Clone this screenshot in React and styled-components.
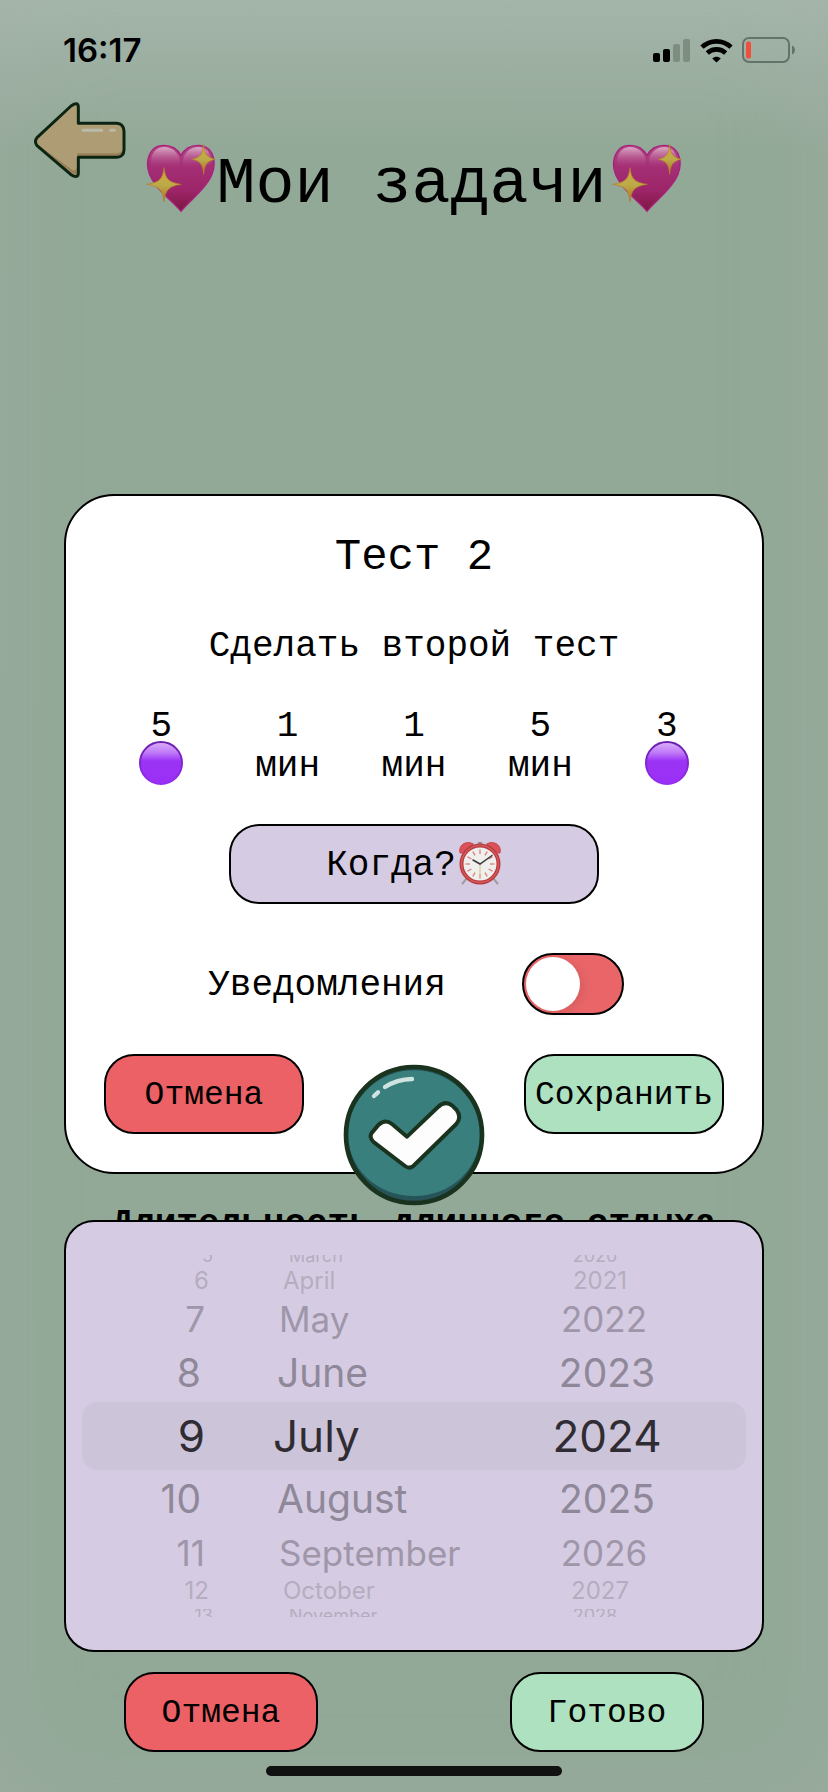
import React, { useState } from "react";
import styled, { createGlobalStyle, css } from "styled-components";

const MONO = '"Liberation Mono", "Courier New", monospace';
const SANS = 'Inter, "Liberation Sans", sans-serif';

const GlobalStyle = createGlobalStyle`
  *, *::before, *::after { box-sizing: border-box; }
  body { margin: 0; background: #92a997; color: #000; font-family: ${MONO}; }
  button { font-family: inherit; color: inherit; cursor: pointer; }
`;

const Page = styled.div`
  min-height: 100vh;
  display: flex;
  flex-direction: column;
  overflow: hidden;
  background: linear-gradient(#a3b6a8 0, #9eb1a3 50px, #93a997 150px, #92a997 100%);
  box-shadow: inset 0 0 100px rgba(170, 176, 174, 0.35);
`;

const StatusBar = styled.div`
  display: flex;
  justify-content: space-between;
  align-items: center;
  height: 100px;
  padding: 0 32px 0 63px;
`;

const Clock = styled.time`
  font: 600 33px/40px ${SANS};
`;

const StatusIcons = styled.div`
  display: flex;
  align-items: center;
  gap: 9px;
  svg { display: block; }
`;

const Header = styled.header`
  display: grid;
  grid-template-columns: 1fr auto 1fr;
  align-items: start;
`;

const BackButton = styled.button`
  justify-self: start;
  margin: 2px 0 0 34px;
  padding: 0;
  border: 0;
  background: none;
  svg { display: block; }
`;

const Title = styled.h1`
  display: flex;
  align-items: center;
  margin: 37px 0 0;
  font-size: 65px;
  line-height: 72px;
  font-weight: 400;
  white-space: nowrap;
  svg { flex: none; }
`;

const TitleText = styled.span`
  padding: 12px 5px 0 0;
`;

const panel = css`
  position: relative;
  margin-left: 64px;
  margin-right: 64px;
  border: 2px solid #000;
`;

const TaskCard = styled.section`
  ${panel}
  margin-top: 273px;
  padding: 35px 0 38px;
  border-radius: 50px;
  background: #fff;
`;

const TaskName = styled.h2`
  margin: 0;
  font-size: 44px;
  line-height: 52px;
  font-weight: 400;
  text-align: center;
`;

const TaskText = styled.p`
  margin: 44px 0 0;
  font-size: 36px;
  line-height: 40px;
  text-align: center;
`;

const Stats = styled.ul`
  display: grid;
  grid-template-columns: repeat(5, 1fr);
  margin: 40px 0 0;
  padding: 0 32px;
  list-style: none;
`;

const Stat = styled.li`
  display: flex;
  flex-direction: column;
  align-items: center;
  font-size: 36px;
  line-height: 40px;
  svg { display: block; margin-top: -6px; }
`;

const WhenButton = styled.button`
  display: flex;
  align-items: center;
  justify-content: center;
  gap: 2px;
  width: 370px;
  height: 80px;
  margin: 37px auto 0;
  border: 2px solid #000;
  border-radius: 30px;
  background: #d5cce3;
  font-size: 36px;
  line-height: 40px;
  svg { display: block; margin-bottom: 2px; }
`;

const NotifyRow = styled.label`
  display: flex;
  align-items: center;
  justify-content: center;
  gap: 76px;
  margin-top: 49px;
  padding-left: 4px;
  font-size: 36px;
  line-height: 40px;
`;

const LabelText = styled.span`
  padding-top: 3px;
`;

const Toggle = styled.input`
  appearance: none;
  display: flex;
  align-items: center;
  width: 102px;
  height: 62px;
  margin: 0;
  padding: 0 2px;
  border: 2px solid #000;
  border-radius: 31px;
  background: #e96568;
  cursor: pointer;
  &::before {
    content: "";
    width: 54px;
    height: 54px;
    border-radius: 50%;
    background: #fff;
    box-shadow: 4px 2px 10px rgba(0, 0, 0, 0.08);
  }
  &:checked { justify-content: flex-end; background: #aee1bf; }
`;

const Actions = styled.div`
  display: flex;
  justify-content: space-between;
  margin: ${(p) => p.$margin};
`;

const ActionButton = styled.button`
  width: ${(p) => p.$width};
  height: 80px;
  padding: 4px 0 0;
  border: 2px solid #000;
  border-radius: 30px;
  background: ${(p) => (p.$kind === "cancel" ? "#ec6165" : "#aee1bf")};
  font-size: 33px;
  line-height: 40px;
`;

const DoneBadge = styled.button`
  position: absolute;
  left: 50%;
  bottom: -34px;
  z-index: 1;
  transform: translateX(-50%);
  padding: 0;
  border: 0;
  background: none;
  svg { display: block; }
`;

const RestHeading = styled.h2`
  margin: 31px 0 -25px;
  font-size: 36px;
  line-height: 40px;
  font-weight: 700;
  text-align: center;
  white-space: nowrap;
`;

const DatePicker = styled.section`
  ${panel}
  display: grid;
  grid-template-columns: 153fr 269fr 242fr;
  padding: 22px 16px;
  border-radius: 30px;
  background: #d5cce3;
  font-family: ${SANS};
`;

const ROW_LOOK = [
  { height: 68, size: 44, color: "#2f2d33" },
  { height: 58, size: 39, color: "#8f8899" },
  { height: 50, size: 35, color: "#9f97a9" },
  { height: 26, size: 24, color: "#b5adbf" },
  { height: 24, size: 18, color: "#b5adbf" },
];

const Wheel = styled.div`
  display: flex;
  flex-direction: column;
  text-align: ${(p) => p.$align};
`;

const WheelRow = styled.div`
  height: ${(p) => ROW_LOOK[p.$step].height}px;
  line-height: ${(p) => ROW_LOOK[p.$step].height}px;
  padding-${(p) => p.$side}: ${(p) => p.$inset}px;
  font-size: ${(p) => ROW_LOOK[p.$step].size}px;
  color: ${(p) => ROW_LOOK[p.$step].color};
  &:first-child { clip-path: inset(11px 0 5px); }
  &:last-child { clip-path: inset(5px 0 11px); }
  ${(p) =>
    p.$step === 0 &&
    css`
      background: #ccc4d9;
      border-radius: ${p.$radius};
    `}
`;

const HomeIndicator = styled.div`
  width: 296px;
  height: 10px;
  margin: 14px auto 16px;
  border-radius: 5px;
  background: #111;
`;

function Signal() {
  return (
    <svg width="38" height="24" viewBox="0 0 38 24" aria-hidden="true">
      <rect x="0" y="15" width="7" height="9" rx="2" />
      <rect x="10" y="11" width="7" height="13" rx="2" />
      <rect x="20" y="6" width="7" height="18" rx="2" fill="#7d8e81" />
      <rect x="30" y="1" width="7" height="23" rx="2" fill="#7d8e81" />
    </svg>
  );
}

function Wifi() {
  return (
    <svg width="33" height="25" viewBox="0 0 33 25" aria-hidden="true">
      <g fill="none" stroke="#000" strokeWidth="4.6">
        <path d="M2 9.2C10 1.4 23 1.4 31 9.2" />
        <path d="M7.3 15C12.4 10.2 20.6 10.2 25.7 15" />
      </g>
      <path d="M12.2 20.4C14.6 18.2 18.4 18.2 20.8 20.4L16.5 24.6Z" />
    </svg>
  );
}

function Battery() {
  return (
    <svg width="54" height="26" viewBox="0 0 54 26" aria-hidden="true">
      <rect x="1" y="1" width="46" height="24" rx="6" fill="none" stroke="#64736a" strokeWidth="2" />
      <rect x="4" y="4.5" width="5" height="17" rx="2" fill="#f04f3e" />
      <path d="M50 8.5C54 10 54 16 50 17.5Z" fill="#64736a" />
    </svg>
  );
}

function BackArrow() {
  const shape =
    "M111 413 213 318Q235 303 235 322V370H350Q371 372 372 393V450Q371 471 350 472H235V518Q235 537 213 524L111 437Q102 425 111 413Z";
  return (
    <svg width="92" height="76" viewBox="102 306 276 228" aria-hidden="true">
      <path d={shape} fill="#ae9c74" />
      <path d="M112 433 220 523Q231 526 231 512V468H350Q367 467 367 450Q362 460 348 460H231V500Q229 514 217 510Z" fill="#9a8059" />
      <path d="M249 391H305M332 391H343" stroke="#babaa8" strokeWidth="9" strokeLinecap="round" />
      <path d={shape} fill="none" stroke="#0c2513" strokeWidth="9" strokeLinejoin="round" />
    </svg>
  );
}

function Heart({ id }) {
  return (
    <svg width="70" height="70" viewBox="0 0 210 210" aria-hidden="true">
      <defs>
        <linearGradient id={id + "-body"} x1="0" y1="0" x2="0" y2="1">
          <stop offset="0" stopColor="#b64a86" />
          <stop offset="0.3" stopColor="#a53076" />
          <stop offset="0.7" stopColor="#9c2468" />
          <stop offset="1" stopColor="#7a173f" />
        </linearGradient>
        <linearGradient id={id + "-shine"} x1="0" y1="0" x2="0" y2="1">
          <stop offset="0" stopColor="#e0bdd2" stopOpacity="0.85" />
          <stop offset="1" stopColor="#b04a88" stopOpacity="0" />
        </linearGradient>
        <linearGradient id={id + "-star"} x1="0" y1="0" x2="0" y2="1">
          <stop offset="0" stopColor="#cfa63a" />
          <stop offset="0.5" stopColor="#bcab48" />
          <stop offset="1" stopColor="#b06f22" />
        </linearGradient>
      </defs>
      <path
        d="M105 202C88 180 55 156 30 124C8 96 0 68 7 42C14 16 32 4 54 4C78 4 96 17 105 34C114 17 132 4 156 4C180 4 198 18 203 44C208 70 199 98 178 124C153 156 122 180 105 202Z"
        fill={`url(#${id}-body)`}
        stroke="#a8217f"
        strokeWidth="4"
      />
      <path d="M15 48C18 22 36 9 55 9C77 9 94 24 101 44V70H15Z" fill={`url(#${id}-shine)`} />
      <path d="M111 44C119 22 136 9 157 9C177 9 192 23 196 48V70H111Z" fill={`url(#${id}-shine)`} />
      <g fill={`url(#${id}-star)`} stroke="#b87a2a" strokeWidth="2">
        <path d="M54 71C58 105 68 115 106 121C68 127 58 138 54 174C50 138 40 127 2 121C40 115 50 105 54 71Z" />
        <path d="M173 1C176 30 182 40 208 46C182 52 176 62 173 91C170 62 164 52 138 46C164 40 170 30 173 1Z" />
      </g>
    </svg>
  );
}

function PurpleDot({ id }) {
  return (
    <svg width="44" height="44" viewBox="0 0 44 44" aria-hidden="true">
      <defs>
        <linearGradient id={id} x1="0" y1="0" x2="0" y2="1">
          <stop offset="0" stopColor="#d9b0f8" />
          <stop offset="0.25" stopColor="#c17bf8" />
          <stop offset="0.45" stopColor="#9b34f5" />
          <stop offset="1" stopColor="#9a2ff6" />
        </linearGradient>
        <linearGradient id={id + "-rim"} x1="0" y1="0" x2="0" y2="1">
          <stop offset="0" stopColor="#6a1fae" />
          <stop offset="1" stopColor="#962df0" />
        </linearGradient>
      </defs>
      <circle cx="22" cy="22" r="21" fill={`url(#${id})`} stroke={`url(#${id}-rim)`} strokeWidth="2" />
    </svg>
  );
}

function AlarmClock() {
  const ticks = Array.from({ length: 12 }, (_, i) => i * 30);
  return (
    <svg width="44" height="44" viewBox="0 0 44 44" aria-hidden="true">
      <path d="M9 37 4.5 42.5M35 37 39.5 42.5" stroke="#a39c9e" strokeWidth="2" strokeLinecap="round" />
      <path d="M2 12C0 4 8-1 15.5 3L4 12Z" fill="#da5258" stroke="#c8484e" />
      <path d="M42 12C44 4 36-1 28.5 3L40 12Z" fill="#da5258" stroke="#c8484e" />
      <rect x="19.5" y="1" width="5" height="2" rx="1" fill="#9b8f92" />
      <circle cx="22" cy="23" r="18.5" fill="#efefee" stroke="#b93a3e" strokeWidth="4" />
      <circle cx="22" cy="23" r="18.5" fill="none" stroke="#d4595b" strokeWidth="1.5" />
      {ticks.map((a) => (
        <path key={a} d="M22 8.5V13" stroke="#e07373" strokeWidth="1.2" transform={`rotate(${a} 22 23)`} />
      ))}
      <path d="M22 22V37" stroke="#d8bf8f" strokeWidth="1" />
      <path d="M15 19 22 23 34 14.5" fill="none" stroke="#3a3a3a" strokeWidth="1.5" strokeLinecap="round" />
    </svg>
  );
}

function CheckBadge() {
  const tick =
    "M124 280 146 254Q166 236 186 252L231 290 324 201Q346 180 367 197L380 210Q396 232 379 252L250 378Q238 388 225 378L133 308Q117 294 124 280Z";
  return (
    <svg width="142" height="142" viewBox="39 72 426 426" aria-hidden="true">
      <circle cx="252" cy="285" r="204" fill="#265458" />
      <path d="M52 272A201 201 0 0 1 452 272C452 385 365 468 252 468S52 385 52 272Z" fill="#387f7e" />
      <circle cx="252" cy="285" r="204" fill="none" stroke="#1a331e" strokeWidth="14" />
      <path d="M165 141Q201 118 246 117M132 168 144 157" fill="none" stroke="#cfe3e1" strokeWidth="13" strokeLinecap="round" />
      <path d={tick} fill="#fdfdfd" stroke="#1a331e" strokeWidth="12" strokeLinejoin="round" />
    </svg>
  );
}

const STATS = [
  { value: "5", dot: true },
  { value: "1", unit: "мин" },
  { value: "1", unit: "мин" },
  { value: "5", unit: "мин" },
  { value: "3", dot: true },
];

// insets[n] pads a row that lies n places from the selected one, so the wheel curves away.
const WHEELS = [
  {
    label: "Day",
    items: ["5", "6", "7", "8", "9", "10", "11", "12", "13"],
    align: "right",
    side: "right",
    insets: [30, 34, 30, 26, 22],
    radius: "16px 0 0 16px",
  },
  {
    label: "Month",
    items: ["March", "April", "May", "June", "July", "August", "September", "October", "November"],
    align: "left",
    side: "left",
    insets: [38, 42, 44, 48, 54],
    radius: "0",
  },
  {
    label: "Year",
    items: ["2020", "2021", "2022", "2023", "2024", "2025", "2026", "2027", "2028"],
    align: "center",
    side: "right",
    insets: [36, 36, 42, 50, 60],
    radius: "0 16px 16px 0",
  },
];

export default function App() {
  const [notify, setNotify] = useState(false);
  return (
    <Page>
      <GlobalStyle />
      <StatusBar>
        <Clock>16:17</Clock>
        <StatusIcons>
          <Signal />
          <Wifi />
          <Battery />
        </StatusIcons>
      </StatusBar>

      <Header>
        <BackButton aria-label="Назад">
          <BackArrow />
        </BackButton>
        <Title>
          <Heart id="heart-left" />
          <TitleText>Мои задачи</TitleText>
          <Heart id="heart-right" />
        </Title>
      </Header>

      <TaskCard>
        <TaskName>Тест 2</TaskName>
        <TaskText>Сделать второй тест</TaskText>
        <Stats>
          {STATS.map((s, i) => (
            <Stat key={i}>
              <span>{s.value}</span>
              {s.dot ? <PurpleDot id={`dot-${i}`} /> : <span>{s.unit}</span>}
            </Stat>
          ))}
        </Stats>
        <WhenButton>
          <LabelText>Когда?</LabelText>
          <AlarmClock />
        </WhenButton>
        <NotifyRow>
          <LabelText>Уведомления</LabelText>
          <Toggle type="checkbox" role="switch" checked={notify} onChange={(e) => setNotify(e.target.checked)} />
        </NotifyRow>
        <Actions $margin="39px 38px 0">
          <ActionButton $kind="cancel" $width="200px">Отмена</ActionButton>
          <ActionButton $kind="save" $width="200px">Сохранить</ActionButton>
        </Actions>
        <DoneBadge aria-label="Готово">
          <CheckBadge />
        </DoneBadge>
      </TaskCard>

      <RestHeading>Длительность длинного отдыха</RestHeading>

      <DatePicker>
        {WHEELS.map((w) => (
          <Wheel key={w.label} role="listbox" aria-label={w.label} $align={w.align}>
            {w.items.map((item, i) => (
              <WheelRow
                key={item}
                role="option"
                aria-selected={i === 4}
                $step={Math.abs(i - 4)}
                $side={w.side}
                $inset={w.insets[Math.abs(i - 4)]}
                $radius={w.radius}
              >
                {item}
              </WheelRow>
            ))}
          </Wheel>
        ))}
      </DatePicker>

      <Actions $margin="20px 124px 0">
        <ActionButton $kind="cancel" $width="194px">Отмена</ActionButton>
        <ActionButton $kind="save" $width="194px">Готово</ActionButton>
      </Actions>
      <HomeIndicator />
    </Page>
  );
}
